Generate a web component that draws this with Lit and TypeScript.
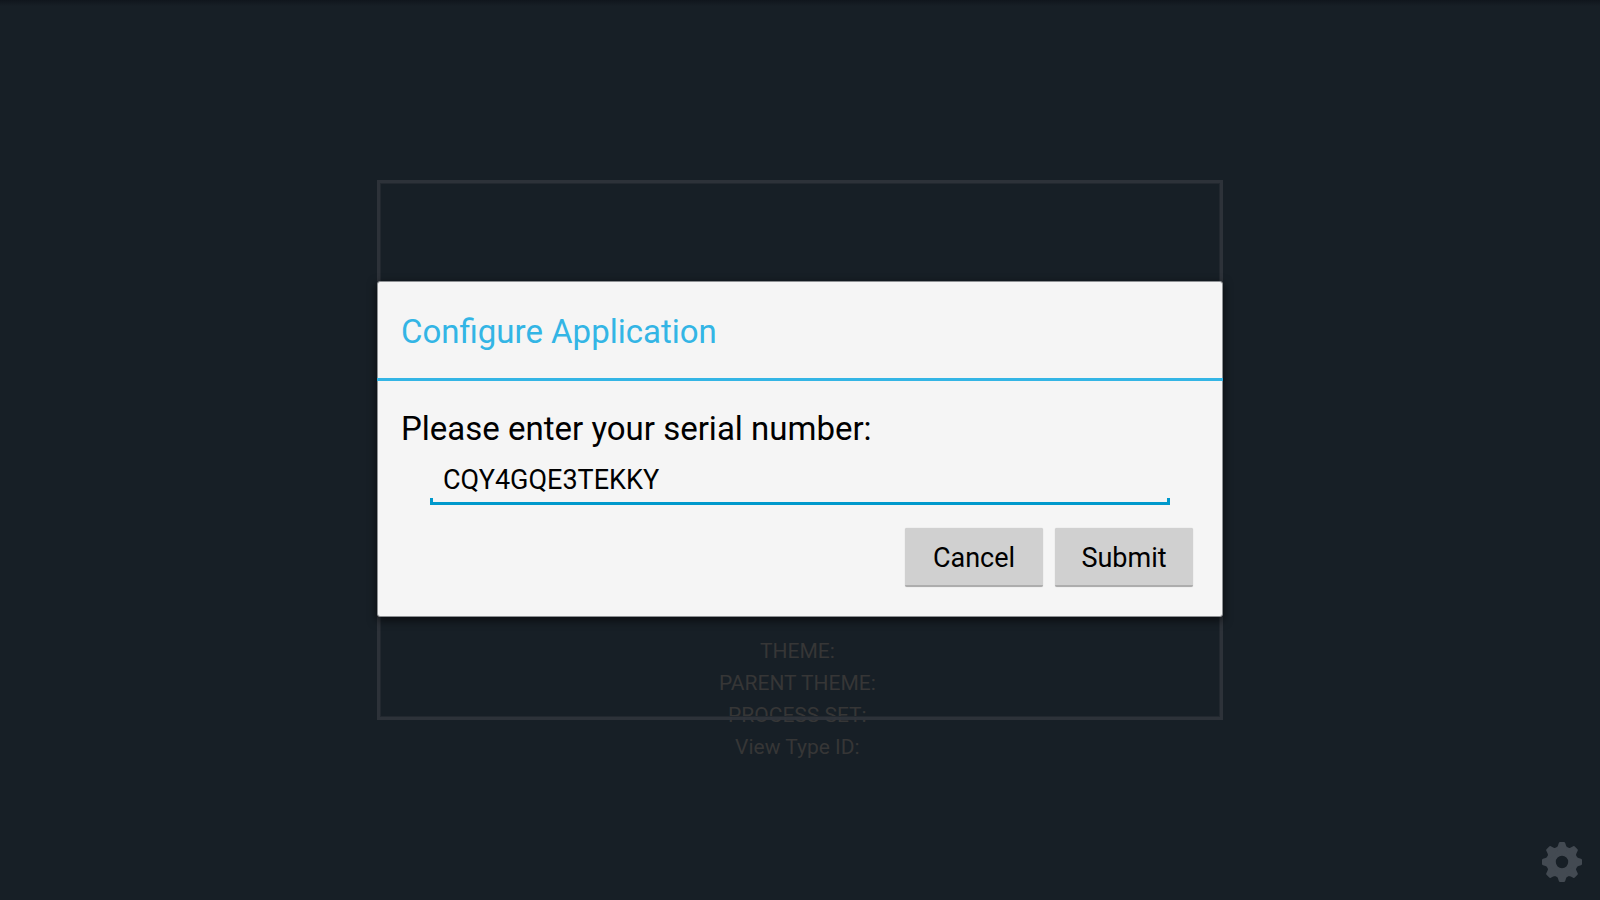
import { LitElement, html, css, svg } from "lit";
import { customElement, state } from "lit/decorators.js";

const toothAngles = [0, 45, 90, 135, 180, 225, 270, 315];

@customElement("app-root")
export class AppRoot extends LitElement {
  static styles = css`
    :host {
      display: block;
      font-family: Roboto, "Noto Sans", sans-serif;
      color: #000;
    }
    .screen {
      position: relative;
      display: grid;
      place-items: center;
      min-height: 100vh;
      overflow: hidden;
      background: linear-gradient(#10161d, #171f26 6px);
    }
    .screen > * {
      grid-area: 1 / 1;
      box-sizing: border-box;
    }
    .details {
      margin: 0;
      padding: 498px 0 0;
      list-style: none;
      text-align: center;
      white-space: pre;
      font-size: 21px;
      line-height: 32px;
      color: #363636;
    }
    .frame {
      width: min(846px, 92vw);
      height: 60vh;
      border: 3px solid #2f333bee;
      box-shadow: inset 0 0 0 1px #22282f;
    }
    .dialog {
      width: min(846px, 92vw);
      margin-bottom: 2px;
      border: 1px solid #8d9093;
      border-radius: 3px;
      background: #f5f5f5;
      box-shadow: 0 3px 8px 1px rgba(0, 0, 0, 0.55);
      z-index: 1;
    }
    .title {
      margin: 0 -1px;
      padding: 30px 24px 26px;
      border-bottom: 3px solid #33b5e5;
      font-size: 33px;
      font-weight: 400;
      line-height: 40px;
      color: #33b5e5;
    }
    .form {
      display: flex;
      flex-direction: column;
      padding: 28px 29px 29px 23px;
    }
    .label {
      font-size: 33px;
      line-height: 40px;
    }
    .field {
      display: flex;
      position: relative;
      margin: 8px 23px 0 29px;
      border-bottom: 3px solid #0099cc;
    }
    .field::after {
      content: "";
      position: absolute;
      inset: auto 0 0 0;
      height: 4px;
      border: solid #0099cc;
      border-width: 0 3px;
      pointer-events: none;
    }
    .input {
      flex: 1;
      min-width: 0;
      box-sizing: border-box;
      height: 45px;
      padding: 1px 13px 0;
      border: 0;
      outline: 0;
      background: none;
      font: 27px/44px Roboto, "Noto Sans", sans-serif;
      color: #000;
    }
    .actions {
      display: flex;
      justify-content: flex-end;
      gap: 12px;
      margin-top: 23px;
    }
    .button {
      width: 138px;
      height: 59px;
      padding: 2px 0 0;
      border: 0;
      border-bottom: 2px solid #adadad;
      border-radius: 2px;
      background: #d0d0d0;
      box-shadow: 0 0 1px #bbb;
      font: 27px/32px Roboto, "Noto Sans", sans-serif;
      color: #000;
    }
    .settings {
      place-self: end;
      display: block;
      margin: 0 18px 18px 0;
      padding: 0;
      border: 0;
      background: none;
    }
    .gear {
      display: block;
      width: 40px;
      height: 40px;
      fill: #434a52;
    }
  `;

  @state() private serial = "CQY4GQE3TEKKY";

  private details = ["THEME: ", "PARENT THEME: ", "PROCESS SET: ", "View Type ID: "];

  render() {
    return html`
      <main class="screen">
        <ul class="details">${this.details.map((d) => html`<li>${d}</li>`)}</ul>
        <div class="frame"></div>
        <section class="dialog" role="dialog" aria-labelledby="title">
          <h1 class="title" id="title">Configure Application</h1>
          <form class="form" @submit=${(e: Event) => e.preventDefault()}>
            <label class="label" for="serial">Please enter your serial number:</label>
            <div class="field">
              <input
                class="input"
                id="serial"
                type="text"
                spellcheck="false"
                autocomplete="off"
                .value=${this.serial}
                @input=${(e: Event) => (this.serial = (e.target as HTMLInputElement).value)}
              />
            </div>
            <div class="actions">
              <button class="button" type="button">Cancel</button>
              <button class="button" type="submit">Submit</button>
            </div>
          </form>
        </section>
        <button class="settings" type="button" aria-label="Settings">
          <svg class="gear" viewBox="-20 -20 40 40" aria-hidden="true">
            <path fill-rule="evenodd" d="M0-15.700a15.700 15.700 0 1 0 0 31.400a15.700 15.700 0 1 0 0-31.400zM0-6.200a6.200 6.200 0 1 1 0 12.400a6.200 6.200 0 1 1 0-12.400z" />
            ${toothAngles.map(
              (a) => svg`<path transform="rotate(${a})" d="M-6.500-13.500Q-4.600-14.500-4-16.500L-3.200-19Q-2.900-20-1.900-20H1.900Q2.900-20 3.200-19L4-16.500Q4.600-14.500 6.500-13.500L4-11H-4z" />`
            )}
          </svg>
        </button>
      </main>
    `;
  }
}
